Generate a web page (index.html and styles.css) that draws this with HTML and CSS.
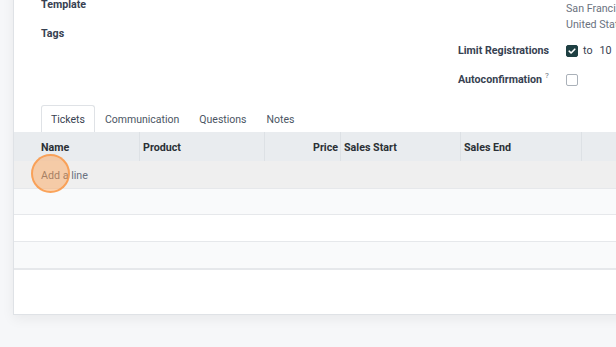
FILE: index.html
```html
<!DOCTYPE html>
<html lang="en">
<head>
    <meta charset="UTF-8">
    <title>Event - Tickets</title>
    <link rel="stylesheet" href="styles.css">
</head>
<body>
    <div class="sheet">
        <!-- Campos do formulário -->
        <div class="form-top">
            <div class="group group-left">
                <div class="field"><span class="label">Template</span></div>
                <div class="field"><span class="label">Tags</span></div>
            </div>
            <div class="group group-right">
                <div class="field">
                    <span class="label"></span>
                    <div class="muted">San Francisco<br>United States</div>
                </div>
                <div class="field field-limit">
                    <span class="label">Limit Registrations</span>
                    <div class="value">
                        <span class="check checked">
                            <svg viewBox="0 0 12 12" width="12" height="12"><path d="M3.2 6.2 L5.1 8 L8.8 4.2" fill="none" stroke="#fff" stroke-width="1.6" stroke-linecap="round" stroke-linejoin="round"/></svg>
                        </span>
                        <span class="to">to</span>
                        <span>10</span>
                    </div>
                </div>
                <div class="field field-auto">
                    <span class="label">Autoconfirmation<sup>?</sup></span>
                    <div class="value"><span class="check"></span></div>
                </div>
            </div>
        </div>

        <!-- Abas -->
        <div class="tabs">
            <span class="tab active">Tickets</span>
            <span class="tab">Communication</span>
            <span class="tab">Questions</span>
            <span class="tab">Notes</span>
        </div>

        <!-- Lista de tickets -->
        <div class="list">
            <div class="list-head">
                <span class="col-name">Name</span>
                <span>Product</span>
                <span class="col-price">Price</span>
                <span>Sales Start</span>
                <span>Sales End</span>
                <span></span>
            </div>
            <div class="list-row add-row">
                <span class="col-name add-line">Add a line</span>
                <span class="click-marker"></span>
            </div>
            <div class="list-row row-a"></div>
            <div class="list-row row-b"></div>
            <div class="list-row row-c"></div>
            <div class="list-foot"></div>
        </div>
    </div>
</body>
</html>
```

FILE: styles.css
```css
/* Estilos gerais */
* {
    box-sizing: border-box;
}
html, body {
    margin: 0;
}
body {
    font-family: Roboto, "Liberation Sans", sans-serif;
    font-size: 10.7px;
    color: #212529;
    background-color: #f6f7f9;
    height: 347px;
    overflow: hidden;
}
.sheet {
    width: 720px;
    margin: -19px 0 0 13px;
    background: #fff;
    border-left: 1px solid #dfe2e6;
    border-bottom: 1px solid #dfe2e6;
    box-shadow: 0 4px 12px rgba(0, 0, 0, 0.06);
}

/* Formulário */
.form-top {
    display: flex;
    padding: 16px 0 0 27px;
}
.group-left {
    width: 417px;
}
.group-left .field {
    line-height: 16px;
    margin-bottom: 13px;
}
.group-right {
    padding-top: 4px;
}
.group-right .field {
    display: grid;
    grid-template-columns: 108px auto;
    height: 16px;
    line-height: 16px;
}
.group-right .field:first-child {
    height: 32px;
}
.label {
    font-weight: bold;
    color: #374151;
}
.label sup {
    font-weight: normal;
    font-size: 8px;
    line-height: 0;
    color: #6b7280;
    margin-left: 3px;
}
.muted {
    color: #6b7280;
}
.field-limit {
    margin-top: 10px;
}
.field-auto {
    margin-top: 13px;
}
.value {
    display: flex;
    align-items: center;
    color: #374151;
}
.check {
    width: 12px;
    height: 12px;
    border: 1px solid #aab1b9;
    border-radius: 2px;
    background: #fff;
    display: inline-flex;
}
.check.checked {
    border-color: #1e3f42;
    background: #1e3f42;
}
.check svg {
    margin: -1px;
}
.to {
    margin: 0 7px 0 5px;
}

/* Abas */
.tabs {
    display: flex;
    margin-top: 17px;
    padding-left: 27px;
    font-size: 10.5px;
}
.tab {
    height: 27px;
    line-height: 26px;
    padding: 1px 9px 0;
    border: 1px solid transparent;
    border-bottom: 0;
    border-radius: 3px 3px 0 0;
    color: #4b5563;
}
.tab.active {
    border-color: #dfe2e6;
    color: #374151;
}

/* Lista */
.list-head, .list-row {
    display: grid;
    grid-template-columns: 125px 125px 76px 120px 121px 1fr;
    align-items: center;
}
.list-head {
    height: 29px;
    background-color: #e9ecef;
    font-weight: bold;
    color: #2b3035;
}
.list-head span {
    height: 100%;
    line-height: 29px;
    padding: 1px 0 0 3px;
    border-left: 1px solid #dde1e5;
}
.list-head .col-name {
    padding-left: 27px;
    border-left: 0;
}
.list-head .col-price {
    text-align: right;
    padding-right: 2px;
}
.list-row {
    border-bottom: 1px solid #e6e8eb;
}
.add-row {
    position: relative;
    height: 28px;
    padding-top: 2px;
    background-color: #efefef;
}
.add-line {
    padding-left: 27px;
    color: #6b7280;
    white-space: nowrap;
}
.row-a {
    height: 26px;
    background-color: #f9fafb;
}
.row-b {
    height: 27px;
}
.row-c {
    height: 28px;
    background-color: #f9fafb;
    border-bottom-width: 2px;
}
.list-foot {
    height: 44px;
}

/* Marcador do clique */
.click-marker {
    position: absolute;
    left: 17px;
    top: -7px;
    width: 39px;
    height: 39px;
    border-radius: 50%;
    background: rgba(255, 150, 60, 0.4);
    border: 2px solid rgba(249, 146, 60, 0.75);
}
```
